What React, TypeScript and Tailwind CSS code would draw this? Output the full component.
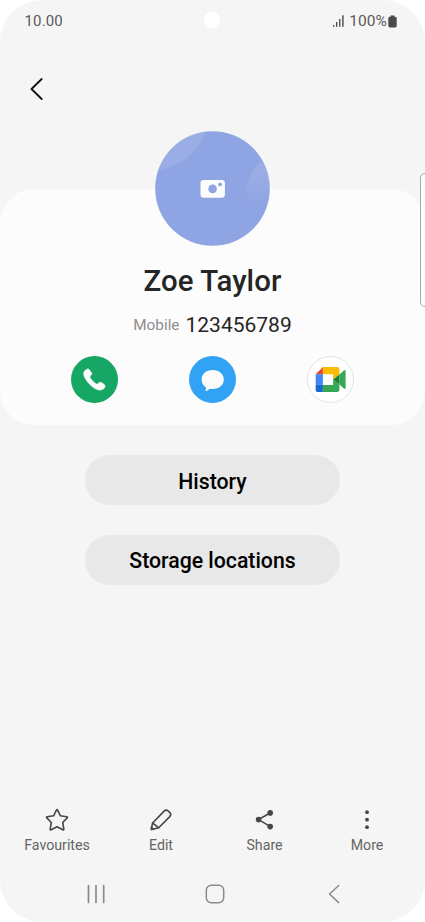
import React from "react";

function SignalIcon() {
  return (
    <svg width="12" height="12" viewBox="0 0 12 12" fill="#4a4a4a">
      <rect x="0.1" y="10" width="1.3" height="1.8" />
      <rect x="3.0" y="7" width="1.3" height="4.8" />
      <rect x="6.1" y="3.9" width="1.3" height="7.9" />
      <rect x="9.2" y="0.3" width="1.4" height="11.5" />
    </svg>
  );
}

function BatteryIcon() {
  return (
    <svg width="9" height="13" viewBox="0 0 9 13" fill="#4a4a4a">
      <path d="M2.5 0.4h4v1.3h0.7q1.5 0 1.5 1.5v7.6q0 1.7-1.5 1.7h-5.4q-1.5 0-1.5-1.7v-7.6q0-1.5 1.5-1.5h0.7z" />
    </svg>
  );
}

function StatusBar() {
  return (
    <div className="grid h-[42px] grid-cols-3 pl-6 pr-[28px] text-[15px] leading-[42px] text-[#5a5a5a]">
      <span className="pl-[0.5px] tracking-[0.15px]">10.00</span>
      <span className="mt-3 ml-[4px] h-4 w-4 justify-self-center rounded-full bg-white" />
      <span className="flex items-center justify-end">
        <SignalIcon />
        <span className="mr-[1px] ml-[4px] text-[15.5px] tracking-[0.05px]">100%</span>
        <BatteryIcon />
      </span>
    </div>
  );
}

function Avatar() {
  return (
    <svg className="-mt-[58.5px] h-[115px] w-[115px] shrink-0" viewBox="0 0 115 115">
      <defs>
        <clipPath id="avatar-clip">
          <circle cx="57.5" cy="57.5" r="57.3" />
        </clipPath>
        <linearGradient id="bubble" x1="0" y1="0" x2="0" y2="1">
          <stop offset="0" stopColor="#fff" stopOpacity="0.11" />
          <stop offset="0.25" stopColor="#fff" stopOpacity="0.1" />
          <stop offset="0.65" stopColor="#fff" stopOpacity="0" />
        </linearGradient>
      </defs>
      <circle cx="57.5" cy="57.5" r="57.3" fill="#8fa4e2" />
      <g clipPath="url(#avatar-clip)">
        <circle cx="-4" cy="-18" r="57.5" fill="#fff" fillOpacity="0.1" />
        <circle cx="133" cy="62" r="41.5" fill="url(#bubble)" />
      </g>
      <rect x="45.5" y="49" width="24.4" height="17.8" rx="3.3" fill="#fcfcfc" />
      <circle cx="57.6" cy="57.9" r="4.3" fill="#8fa4e2" />
      <circle cx="65.1" cy="53.4" r="1.9" fill="#8fa4e2" />
    </svg>
  );
}

function CallIcon() {
  return (
    <svg width="47" height="47" viewBox="0.5 0.5 47 47">
      <circle cx="24" cy="24" r="23.5" fill="#16a765" />
      <path
        d="M14.2 15.2C15.3 14.1 16.8 13 18 13.5C19.2 14.1 20.2 16 21 17.3C21.7 18.5 21 19.5 19.9 20.4C19.2 21 19.3 21.8 20 22.8C21.4 24.9 23.1 26.7 25.3 28.1C26.3 28.8 27 28.8 27.6 28.1C28.5 27 29.6 26.4 30.8 27.1C32.2 27.9 33.8 28.8 34.4 29.9C35 31.2 34 32.6 32.7 33.6C30.5 35.3 27.6 34.8 24.8 33.2C20.7 30.8 17.3 27.4 14.9 23.3C13.2 20.3 12.4 17.2 14.2 15.2Z"
        fill="#fcfcfc"
        stroke="#fcfcfc"
        strokeWidth="0.5"
      />
    </svg>
  );
}

function MessageIcon() {
  return (
    <svg width="47" height="47" viewBox="0.5 0.5 47 47">
      <circle cx="24" cy="24" r="23.5" fill="#32a3f4" />
      <path
        d="M24.2 14.5C30.6 14.5 35.3 18.5 35.3 24C35.3 29.5 30.6 33.5 24.2 33.5C23.1 33.5 22.1 33.4 21.1 33.2C20.2 34.4 18.9 35.3 17.3 35.6C16.8 35.7 16.7 35.3 17 34.9C17.5 34 17.7 32.9 17.3 31.8C14.7 30 13.1 27.2 13.1 24C13.1 18.5 17.8 14.5 24.2 14.5Z"
        fill="#fcfcfc"
      />
    </svg>
  );
}

function MeetIcon() {
  return (
    <svg width="47" height="47" viewBox="0.5 0.5 47 47">
      <circle cx="24" cy="24" r="23" fill="#fff" stroke="#e2e2e2" strokeWidth="1" />
      <path d="M16.4 11.6V18.7H9.2Z" fill="#ea4335" />
      <path d="M9.2 18.7H16.4V29.4H9.2Z" fill="#4285f4" />
      <path d="M9.2 29.4H16.4V36.5H11Q9.2 36.5 9.2 34.7Z" fill="#1967d2" />
      <path d="M16.4 11.6H30.8Q32.9 11.6 32.9 13.6V18.9L26.6 24V18.7H16.4Z" fill="#fbbc04" />
      <path d="M16.4 29.4H26.6V24L32.9 29.1V34.5Q32.9 36.5 30.8 36.5H16.4Z" fill="#34a853" />
      <path d="M32.9 18.9L37.5 15Q39.1 14 39.1 15.6V32.5Q39.1 34 37.5 33L32.9 29.1Z" fill="#34a853" />
      <path d="M26.6 24L32.9 18.9V29.1Z" fill="#188038" />
    </svg>
  );
}

function ContactCard() {
  return (
    <section className="mt-[53px] flex h-[236px] flex-col items-center rounded-[34px] bg-[#fcfcfc]">
      <Avatar />
      <h1 className="mt-[17.5px] text-[29.4px] leading-9 font-medium tracking-[0.08px] whitespace-nowrap text-[#252525]">
        Zoe Taylor
      </h1>
      <div className="mt-3 flex h-7 items-center gap-[6px] leading-7">
        <span className="text-[15.3px] text-[#8e8e8e]">Mobile</span>
        <span className="text-[21px] text-[#252525]">123456789</span>
      </div>
      <div className="mt-[17px] flex gap-[71px]">
        <CallIcon />
        <MessageIcon />
        <MeetIcon />
      </div>
    </section>
  );
}

function PillButton({ label }: { label: string }) {
  return (
    <button className="h-[50px] w-[255px] rounded-full bg-[#e8e8e8] pt-[3px] text-[21.25px] leading-7 font-medium text-black">
      {label}
    </button>
  );
}

function StarIcon() {
  return (
    <svg width="26" height="26" viewBox="0 0 26 26" fill="none" stroke="#464646" strokeWidth="1.6" strokeLinejoin="round">
      <path d="M12.4 3.1Q13 2.1 13.6 3.1L16.4 8.8L22.8 9.8Q24 10.1 23.2 10.9L18.7 15.5L19.8 22Q19.9 23.2 18.8 22.7L13 19.7L7.2 22.7Q6.1 23.2 6.2 22L7.3 15.5L2.8 10.9Q2 10.1 3.2 9.8L9.6 8.8Z" />
    </svg>
  );
}

function PencilIcon() {
  return (
    <svg width="26" height="26" viewBox="0 0 26 26" fill="none" stroke="#464646" strokeWidth="1.6" strokeLinejoin="round" strokeLinecap="round">
      <path d="M4.6 16L16.1 4.1Q18 2.3 20.1 3.9L21.9 5.6Q23.6 7.6 21.8 9.6L10.7 20.8L3.9 22.6Q3.2 22.7 3.3 21.9Z" />
      <path d="M4.8 16.2L10.5 20.7" />
      <path d="M3.5 19.8L6.1 22L3.5 22.6Z" fill="#464646" strokeWidth="0.6" />
    </svg>
  );
}

function ShareIcon() {
  return (
    <svg width="26" height="26" viewBox="0 0 26 26" fill="#464646">
      <path d="M18.4 5.8L6.6 12.6L18.4 19.6" fill="none" stroke="#464646" strokeWidth="1.6" />
      <circle cx="6.6" cy="12.6" r="2.8" />
      <circle cx="18.2" cy="5.9" r="2.8" />
      <circle cx="18.2" cy="19.6" r="2.8" />
    </svg>
  );
}

function MoreIcon() {
  return (
    <svg width="26" height="26" viewBox="0 0 26 26" fill="#464646">
      <circle cx="13" cy="5.2" r="1.9" />
      <circle cx="13" cy="12.7" r="1.9" />
      <circle cx="13" cy="20.2" r="1.9" />
    </svg>
  );
}

function Action({ label, children }: { label: string; children: React.ReactNode }) {
  return (
    <div className="flex flex-col items-center text-[14.2px] leading-5 text-[#646464]">
      {children}
      <span className="mt-[2.4px]">{label}</span>
    </div>
  );
}

function NavigationBar() {
  return (
    <nav className="mt-[29px] flex h-5 items-center pl-[86px]">
      <svg width="20" height="20" viewBox="0 0 20 20" stroke="#8b8b8b" strokeWidth="1.7" strokeLinecap="round">
        <path d="M2.5 1.5V18.5M10 1.5V18.5M17.7 1.5V18.5" />
      </svg>
      <svg className="ml-[99px]" width="20" height="20" viewBox="0 0 20 20" fill="none" stroke="#8b8b8b" strokeWidth="1.5">
        <rect x="1.3" y="1.3" width="17.4" height="17.4" rx="5" />
      </svg>
      <svg className="ml-[99px]" width="20" height="20" viewBox="0 0 20 20" fill="none" stroke="#8b8b8b" strokeWidth="1.5" strokeLinecap="round" strokeLinejoin="round">
        <path d="M14.7 1.5L5.5 10L14.7 18.6" />
      </svg>
    </nav>
  );
}

export default function App() {
  return (
    <div className="bg-white font-['Roboto','Liberation_Sans',sans-serif]">
      <main className="relative flex h-[922px] w-[425px] flex-col overflow-hidden rounded-[42px] bg-[#f5f5f5]">
        <StatusBar />
        <header className="flex h-[94px] items-center pl-6">
          <svg width="24" height="24" viewBox="0 0 24 24" fill="none" stroke="#111" strokeWidth="1.8" strokeLinecap="round" strokeLinejoin="round">
            <path d="M17.7 2L7.5 12L17.7 22" />
          </svg>
        </header>
        <ContactCard />
        <div className="mt-[30px] flex flex-col items-center gap-[29.5px]">
          <PillButton label="History" />
          <PillButton label="Storage locations" />
        </div>
        <div className="mt-auto pb-[18px]">
          <div className="grid grid-cols-[104px_104px_103px_102px] pl-[5px]">
            <Action label="Favourites"><StarIcon /></Action>
            <Action label="Edit"><PencilIcon /></Action>
            <Action label="Share"><ShareIcon /></Action>
            <Action label="More"><MoreIcon /></Action>
          </div>
          <NavigationBar />
        </div>
        <div className="absolute top-[173px] -right-[5px] h-[134px] w-[10px] rounded-[5px] border border-[#aaa] bg-[#fcfcfc]" />
      </main>
    </div>
  );
}
